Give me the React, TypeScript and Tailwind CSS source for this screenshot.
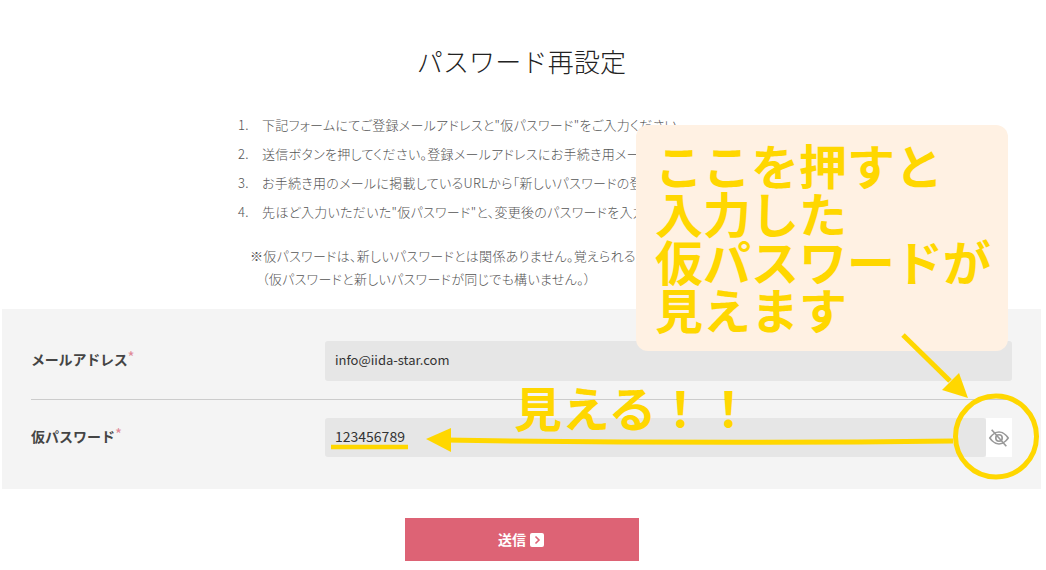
const jp = "font-['Noto_Sans_CJK_JP','Noto_Sans',sans-serif]";

const steps = [
  "下記フォームにてご登録メールアドレスと\"仮パスワード\"をご入力ください。",
  "送信ボタンを押してください。登録メールアドレスにお手続き用メールが届きます。",
  "お手続き用のメールに掲載しているURLから「新しいパスワードの登録」へ進みます。",
  "先ほど入力いただいた\"仮パスワード\"と、変更後のパスワードを入力してください。",
];

function Req() {
  return <span className="relative -top-[3px] text-[15px] leading-none font-normal text-[#e08a97]">*</span>;
}

export default function App() {
  return (
    <div className={`relative h-[570px] w-[1046px] overflow-hidden bg-white ${jp}`}>
      <h1 className="w-[1043px] pt-[42px] text-center text-[26px] leading-[38px] font-light tracking-[0.2px] text-[#222]">
        パスワード再設定
      </h1>

      <ol className="ml-[238px] mt-[34px] flex w-[700px] flex-col gap-[7px] text-[13px] leading-[22px] font-light tracking-[0.3px] text-[#555] [font-feature-settings:'palt']">
        {steps.map((s, i) => (
          <li key={i} className="flex">
            <span className="w-[24px] shrink-0">{i + 1}.</span>
            <span className="whitespace-nowrap">{s}</span>
          </li>
        ))}
      </ol>

      <div className="ml-[250px] mt-[21px] text-[13px] leading-[23px] font-light tracking-[0.3px] text-[#555] [font-feature-settings:'palt']">
        <p>※仮パスワードは、新しいパスワードとは関係ありません。覚えられるものをご入力ください。</p>
        <p className="pl-[12px]">（仮パスワードと新しいパスワードが同じでも構いません。）</p>
      </div>

      <form className="mt-[19px] ml-[2px] flex h-[180px] w-[1039px] flex-col bg-[#f4f4f4] pt-[32px] pl-[29px] pr-[29px]">
        <div className="flex h-[59px] items-start border-b border-[#cccccc]">
          <label className="flex h-[40px] w-[294px] items-center pb-[3px] text-[14px] font-bold tracking-[-0.2px] text-[#444]">
            メールアドレス<Req />
          </label>
          <div className="flex h-[40px] flex-1 items-center rounded-[3px] bg-[#e6e6e6] pb-[3px] pl-[10px] text-[13px] text-[#333]">
            info@iida-star.com
          </div>
        </div>
        <div className="mt-[18px] flex h-[39px] items-start">
          <label className="flex h-[39px] w-[294px] items-center pb-[3px] text-[14px] font-bold text-[#444]">
            仮パスワード<Req />
          </label>
          <div className="flex h-[39px] flex-1">
            <div className="flex flex-1 items-center rounded-[3px] bg-[#e6e6e6] pb-[3px] pl-[10px] text-[14px] text-[#333]">
              123456789
            </div>
            <button type="button" className="flex w-[26px] items-center justify-center bg-white">
              <svg width="22" height="22" viewBox="0 0 24 24" fill="none" stroke="#999999" strokeWidth="1.8">
                <path d="M2 12s4-6.5 10-6.5S22 12 22 12s-4 6.5-10 6.5S2 12 2 12z" />
                <circle cx="12" cy="12" r="3.5" />
                <path d="M4 3l16 18" />
              </svg>
            </button>
          </div>
        </div>
      </form>

      <button
        type="button"
        className="mt-[29px] ml-[405px] flex h-[43px] w-[234px] items-center justify-center gap-[4px] bg-[#dd6375] pr-[2px] text-[14px] font-bold text-white"
      >
        送信
        <span className="flex h-[14px] w-[14px] items-center justify-center rounded-[2px] bg-white">
          <svg width="10" height="10" viewBox="0 0 10 10" fill="none" stroke="#dd6375" strokeWidth="1.6">
            <path d="M3.5 1.5L7 5 3.5 8.5" />
          </svg>
        </span>
      </button>

      {/* Annotations laid over the screenshot */}
      <div className="absolute left-[636px] top-[125px] h-[226px] w-[372px] rounded-[12px] bg-[#fff1e3] pl-[19px] pt-[15px] text-[48px] leading-[48px] font-bold text-[#ffd700]">
        <p>ここを押すと</p>
        <p>入力した</p>
        <p>仮パスワードが</p>
        <p>見えます</p>
      </div>
      <div className="absolute left-[514px] top-[382px] text-[48px] leading-[48px] font-bold text-[#ffd700]">
        見える！！
      </div>
      <svg className="pointer-events-none absolute left-0 top-0" width="1046" height="570" viewBox="0 0 1046 570" fill="none">
        <circle cx="996" cy="436.5" r="40.5" stroke="#ffd700" strokeWidth="5" />
        <path d="M903 335L950 381" stroke="#ffd700" strokeWidth="5" />
        <path d="M968 398L942 390L959 373Z" fill="#ffd700" />
        <path d="M953 441Q700 444 445 440" stroke="#ffd700" strokeWidth="5" />
        <path d="M426 439L451 428L451 452Z" fill="#ffd700" />
        <path d="M331 447L408 447" stroke="#ffd700" strokeWidth="4.5" />
      </svg>
    </div>
  );
}
